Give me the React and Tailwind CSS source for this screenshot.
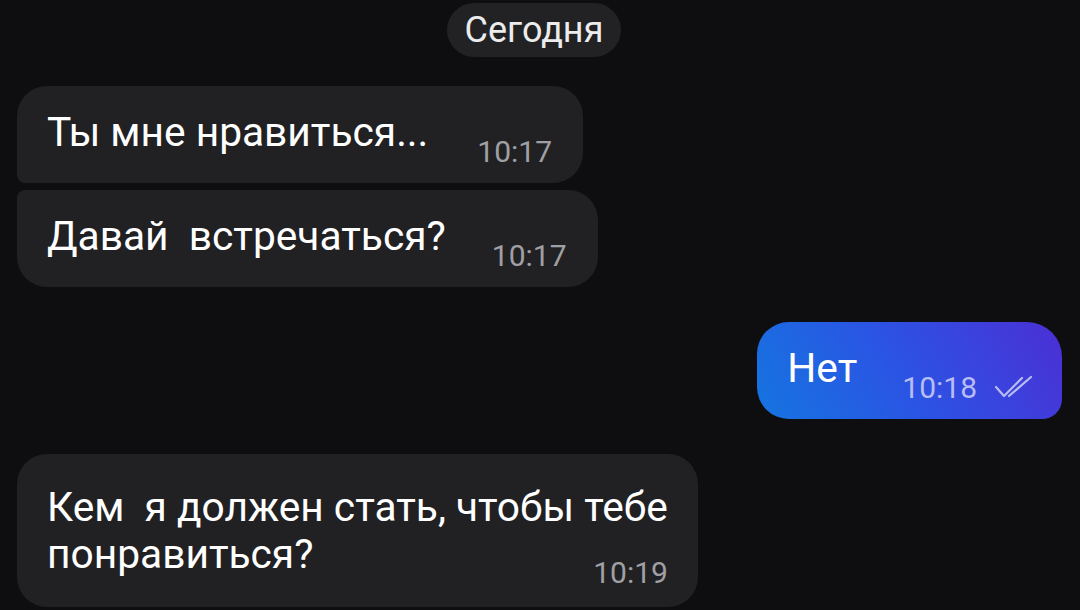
import React from "react";

function Checks() {
  return (
    <svg width="42" height="26" viewBox="0 0 42 26" fill="none" className="shrink-0">
      <path d="M3 13 L11 22 L29 4" stroke="#b7bdf3" strokeWidth="2.2" strokeLinecap="round" strokeLinejoin="round" />
      <path d="M16 22 L38 3" stroke="#b7bdf3" strokeWidth="2.2" strokeLinecap="round" strokeLinejoin="round" />
    </svg>
  );
}

export default function App() {
  return (
    <div
      className="w-[1080px] h-[610px] overflow-hidden bg-[#0e0e10] text-white flex flex-col"
      style={{ fontFamily: "Roboto, 'Noto Sans', sans-serif" }}
    >
      <div className="flex justify-center pt-[3px] pr-[12px]">
        <div className="h-[54px] px-[18px] rounded-full bg-[#222225] flex items-center text-[36px] text-[#ececec] leading-none">
          Сегодня
        </div>
      </div>

      <div className="flex flex-col pl-[17px] pr-[18px] mt-[29px]">
        <div className="self-start flex items-end gap-[49px] bg-[#212124] rounded-tl-[30px] rounded-bl-[8px] rounded-r-[30px] pl-[30px] pr-[31px] pt-[23px] pb-[13px]">
          <span className="text-[40.7px] leading-[47px] mb-[14px]">Ты мне нравиться...</span>
          <span className="text-[30px] leading-[36px] text-[#a0a0a4]">10:17</span>
        </div>

        <div className="self-start mt-[7px] flex items-end gap-[46px] bg-[#212124] rounded-tl-[8px] rounded-bl-[30px] rounded-r-[30px] pl-[30px] pr-[31px] pt-[23px] pb-[13px]">
          <span className="text-[40.7px] leading-[47px] mb-[14px] whitespace-pre">Давай  встречаться?</span>
          <span className="text-[30px] leading-[36px] text-[#a0a0a4]">10:17</span>
        </div>

        <div className="self-end mt-[35px] flex items-end bg-[linear-gradient(60deg,#1575e0_0%,#2a55e4_45%,#4b2fd5_100%)] rounded-l-[32px] rounded-tr-[35px] rounded-br-[20px] pl-[30px] pr-[27px] pt-[23px] pb-[13px]">
          <span className="text-[40.7px] leading-[47px] mb-[14px]">Нет</span>
          <span className="ml-[45px] text-[30px] leading-[36px] text-[#b7bdf3]">10:18</span>
          <span className="ml-[16px] mb-[6px]"><Checks /></span>
        </div>

        <div className="self-start mt-[35px] flex flex-col bg-[#212124] rounded-[30px] pl-[30px] pr-[30px] pt-[30px] pb-[16px]">
          <span className="text-[40.7px] leading-[47px] whitespace-pre">
            Кем  я должен стать, чтобы тебе{"\n"}понравиться?
          </span>
          <span className="self-end -mt-[23px] text-[30px] leading-[36px] text-[#a0a0a4]">10:19</span>
        </div>
      </div>
    </div>
  );
}
